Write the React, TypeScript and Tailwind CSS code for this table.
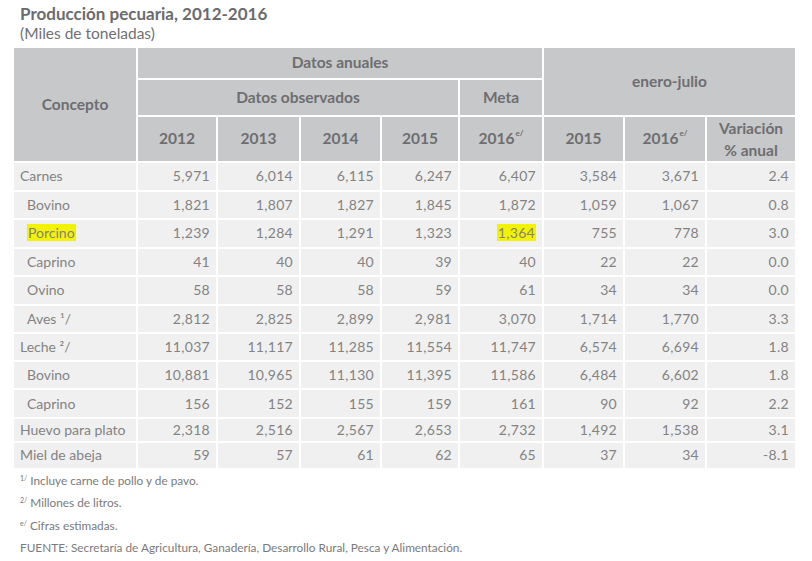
import React from "react";

type Row = {
  label: React.ReactNode;
  indent?: boolean;
  vals: string[];
  h: string;
  mark?: boolean;
};

const rows: Row[] = [
  { label: "Carnes", vals: ["5,971", "6,014", "6,115", "6,247", "6,407", "3,584", "3,671", "2.4"], h: "h-[26.5px]" },
  { label: "Bovino", indent: true, vals: ["1,821", "1,807", "1,827", "1,845", "1,872", "1,059", "1,067", "0.8"], h: "h-[26.5px]" },
  { label: "Porcino", indent: true, mark: true, vals: ["1,239", "1,284", "1,291", "1,323", "1,364", "755", "778", "3.0"], h: "h-[26.5px]" },
  { label: "Caprino", indent: true, vals: ["41", "40", "40", "39", "40", "22", "22", "0.0"], h: "h-[26.5px]" },
  { label: "Ovino", indent: true, vals: ["58", "58", "58", "59", "61", "34", "34", "0.0"], h: "h-[26.5px]" },
  { label: <>Aves ¹/</>, indent: true, vals: ["2,812", "2,825", "2,899", "2,981", "3,070", "1,714", "1,770", "3.3"], h: "h-[26.3px]" },
  { label: <>Leche ²/</>, vals: ["11,037", "11,117", "11,285", "11,554", "11,747", "6,574", "6,694", "1.8"], h: "h-[26.3px]" },
  { label: "Bovino", indent: true, vals: ["10,881", "10,965", "11,130", "11,395", "11,586", "6,484", "6,602", "1.8"], h: "h-[26.3px]" },
  { label: "Caprino", indent: true, vals: ["156", "152", "155", "159", "161", "90", "92", "2.2"], h: "h-[26.3px]" },
  { label: "Huevo para plato", vals: ["2,318", "2,516", "2,567", "2,653", "2,732", "1,492", "1,538", "3.1"], h: "h-[22px]" },
  { label: "Miel de abeja", vals: ["59", "57", "61", "62", "65", "37", "34", "-8.1"], h: "h-[25.5px]" },
];

const widths = ["w-[122px]", "w-[78px]", "w-[81px]", "w-[79px]", "w-[76px]", "w-[82px]", "w-[79px]", "w-[80px]", "w-[88px]"];

const th = "bg-[#c7c8ca] text-[#6e6e70] font-bold text-[15.5px] text-center align-middle p-0";
const td = "bg-[#f0f0f0] text-[#838383] text-[14px] p-0 align-middle leading-[18px]";

function Sup({ children }: { children: React.ReactNode }) {
  return <sup className="text-[8px] font-bold align-[4px] ml-[1px]">{children}</sup>;
}

function Note({ mark, children }: { mark: string; children: React.ReactNode }) {
  return (
    <p className="h-[22.3px] leading-[22px]">
      <span className="text-[7px] align-[4px] leading-none">{mark}</span> {children}
    </p>
  );
}

export default function App() {
  return (
    <div
      className="w-[812px] h-[561px] bg-white overflow-hidden"
      style={{ fontFamily: "Lato, 'Open Sans', sans-serif" }}
    >
      <div className="pl-[20px] pt-[3px]">
        <h1 className="text-[17px] font-bold text-[#6b6b6d] leading-[21px]">
          Producción pecuaria, 2012-2016
        </h1>
        <p className="text-[15.5px] text-[#707072] leading-[19px]">(Miles de toneladas)</p>
      </div>

      <table className="ml-[12px] mt-[3px] table-fixed border-separate border-spacing-[2px]">
        <colgroup>
          {widths.map((w, i) => (
            <col key={i} className={w} />
          ))}
        </colgroup>
        <thead>
          <tr className="h-[30px]">
            <th rowSpan={3} className={th}>
              Concepto
            </th>
            <th colSpan={5} className={th}>
              Datos anuales
            </th>
            <th colSpan={3} rowSpan={2} className={th}>
              enero-julio
            </th>
          </tr>
          <tr className="h-[35px]">
            <th colSpan={4} className={th}>
              Datos observados
            </th>
            <th className={th}>Meta</th>
          </tr>
          <tr className="h-[42px]">
            <th className={th}>2012</th>
            <th className={th}>2013</th>
            <th className={th}>2014</th>
            <th className={th}>2015</th>
            <th className={th}>
              2016<Sup>e/</Sup>
            </th>
            <th className={th}>2015</th>
            <th className={th}>
              2016<Sup>e/</Sup>
            </th>
            <th className={`${th} leading-[22px]`}>
              Variación
              <br />% anual
            </th>
          </tr>
        </thead>
        <tbody>
          {rows.map((r, i) => (
            <tr key={i} className={r.h}>
              <td className={`${td} ${r.indent ? "pl-[13px]" : "pl-[6px]"}`}>
                {r.mark ? <span className="bg-[#f3f300] px-[1px]">{r.label}</span> : r.label}
              </td>
              {r.vals.map((v, j) => (
                <td key={j} className={`${td} text-right pr-[6px] tracking-[0.3px]`}>
                  {r.mark && j === 4 ? <span className="bg-[#f3f300] px-[1px]">{v}</span> : v}
                </td>
              ))}
            </tr>
          ))}
        </tbody>
      </table>

      <div className="pl-[20px] pt-0 text-[11.8px] text-[#7a7a7a]">
        <Note mark="1/">Incluye carne de pollo y de pavo.</Note>
        <Note mark="2/">Millones de litros.</Note>
        <Note mark="e/">Cifras estimadas.</Note>
        <p className="h-[22.3px] leading-[22px]">
          FUENTE: Secretaría de Agricultura, Ganadería, Desarrollo Rural, Pesca y Alimentación.
        </p>
      </div>
    </div>
  );
}
